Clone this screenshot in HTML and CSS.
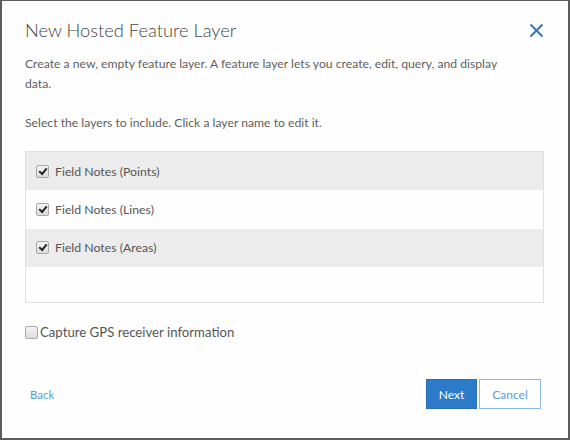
FILE: index.html
```html
<!DOCTYPE html>
<html>
<head>
<meta charset="utf-8">
<link rel="stylesheet" href="styles.css">
</head>
<body>
<div class="frame">
  <div class="dialog">
    <div class="header">
      <h1 class="title">New Hosted Feature Layer</h1>
      <svg class="close" width="15" height="15" viewBox="0 0 15 15"><path d="M1.5 1.5 L13.5 13.5 M13.5 1.5 L1.5 13.5" stroke="#2b7bc8" stroke-width="2" fill="none"/></svg>
    </div>
    <p class="desc">Create a new, empty feature layer. A feature layer lets you create, edit, query, and display data.</p>
    <p class="hint">Select the layers to include. Click a layer name to edit it.</p>
    <div class="list">
      <div class="row alt"><span class="cb checked"></span><span class="label">Field Notes (Points)</span></div>
      <div class="row"><span class="cb checked"></span><span class="label">Field Notes (Lines)</span></div>
      <div class="row alt"><span class="cb checked"></span><span class="label">Field Notes (Areas)</span></div>
    </div>
    <div class="gps"><span class="cb"></span><span class="gps-label">Capture GPS receiver information</span></div>
    <div class="footer">
      <a class="back">Back</a>
      <div class="buttons">
        <button class="btn primary">Next</button>
        <button class="btn secondary">Cancel</button>
      </div>
    </div>
  </div>
</div>
</body>
</html>
```
FILE: styles.css
```css
html, body {
  margin: 0;
  padding: 0;
  background: #6a6a6a;
}
.frame {
  width: 570px;
  height: 440px;
  box-sizing: border-box;
  border-top: 1px solid #5c5c5c;
  border-left: 2px solid #5c5c5c;
  border-right: 2px solid #5c5c5c;
  border-bottom: 2px solid #5c5c5c;
  background: #fefefe;
}
.dialog {
  padding: 16px 24px 0 23px;
  font-family: "Lato", "Open Sans", sans-serif;
  color: #5e5e5e;
}
.header {
  display: flex;
  justify-content: space-between;
  align-items: center;
  height: 26px;
}
.title {
  margin: 0;
  font-size: 18.3px;
  font-weight: 300;
  color: #444;
  line-height: 26px;
}
.desc {
  margin: 11px 0 0 0;
  font-size: 12.2px;
  line-height: 20px;
  padding-right: 20px;
}
.hint {
  margin: 19px 0 0 0;
  font-size: 12.2px;
  line-height: 20px;
}
.list {
  margin-top: 18px;
  height: 152px;
  box-sizing: border-box;
  border: 1px solid #e0e0e0;
  background: #fefefe;
}
.row {
  height: 38.3px;
  display: flex;
  align-items: center;
  padding-left: 10px;
}
.row.alt {
  background: #ececec;
}
.cb {
  width: 11px;
  height: 11px;
  border: 1px solid #a8a8a8;
  border-radius: 2px;
  background: linear-gradient(#f4f4f4, #dcdcdc);
  display: inline-flex;
  align-items: center;
  justify-content: center;
  flex-shrink: 0;
}
.cb.checked::after {
  content: "";
  width: 6px;
  height: 3px;
  border-left: 2px solid #222;
  border-bottom: 2px solid #222;
  transform: rotate(-50deg);
  margin-top: -2px;
}
.label {
  margin-left: 6px;
  font-size: 12.3px;
  color: #555;
}
.gps {
  display: flex;
  align-items: center;
  margin-top: 22px;
  height: 14px;
}
.gps-label {
  margin-left: 2px;
  font-size: 13.2px;
  color: #555;
}
.footer {
  display: flex;
  justify-content: space-between;
  align-items: center;
  margin-top: 40px;
  padding-left: 5px;
  padding-right: 3px;
}
.back {
  font-size: 11.5px;
  color: #5b9bd8;
}
.buttons {
  display: flex;
  gap: 2px;
}
.btn {
  height: 30px;
  font-family: "Lato", "Open Sans", sans-serif;
  font-size: 12px;
  padding: 0;
  border-radius: 0;
}
.primary {
  width: 51px;
  background: #2b7bc8;
  color: #fff;
  border: 1px solid #2570b8;
}
.secondary {
  width: 62px;
  background: #fff;
  color: #5b9bd8;
  border: 1px solid #8cb8e4;
}
```
